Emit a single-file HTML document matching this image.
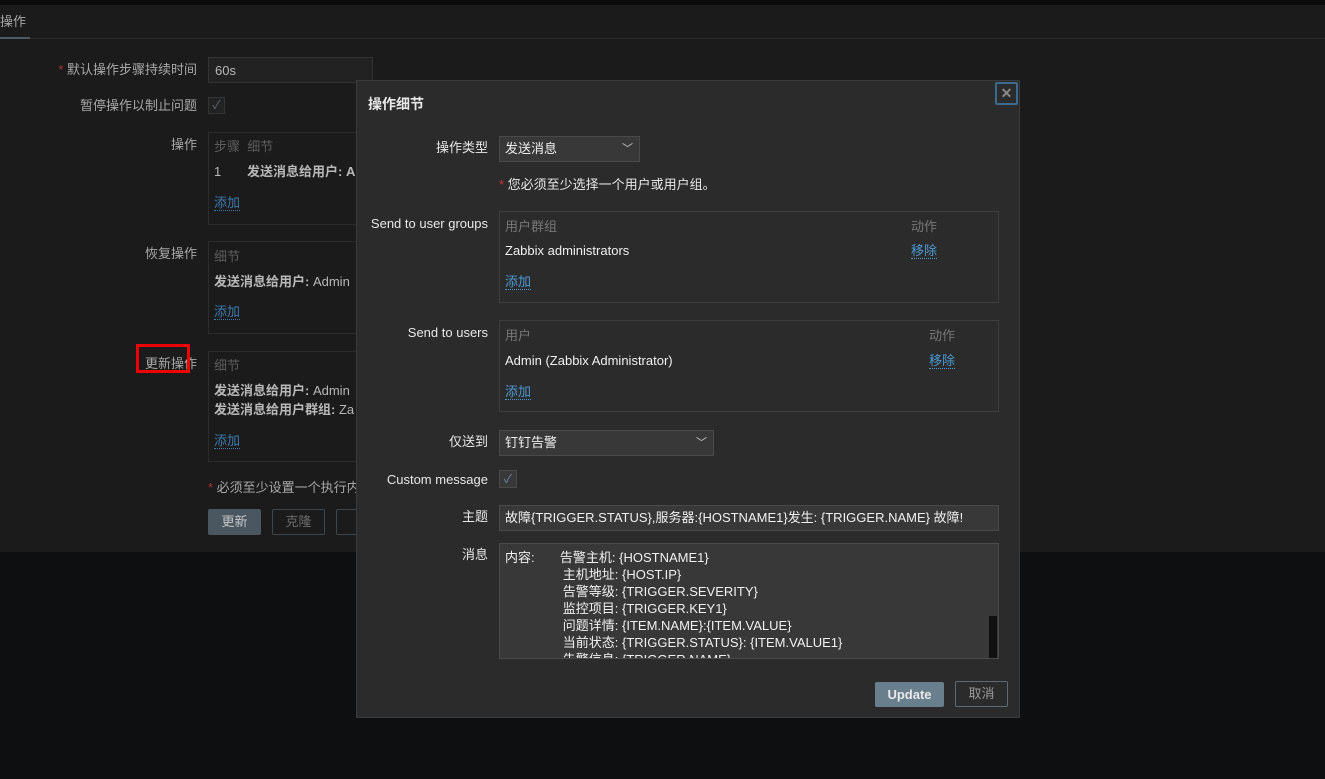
<!DOCTYPE html>
<html><head><meta charset="utf-8"><style>
*{box-sizing:border-box;margin:0;padding:0}
body{width:1325px;height:779px;background:#0e0f11;font-family:"Liberation Sans","Noto Sans CJK SC",sans-serif;font-size:13px;line-height:15px;color:#c8c8c8;position:relative;overflow:hidden}
.abs{position:absolute}
.page{left:0;top:5px;width:1325px;height:547px;background:#1b1b1b}
.lbl{text-align:right;color:#a8a8a8}
.box{border:1px solid #2c2c2c}
.link{color:#3c7ab0;border-bottom:1px dotted #3c7ab0}
.dlg{left:356px;top:80px;width:664px;height:638px;background:#2b2b2b;border:1px solid #3a3a3a}
.dl{color:#e8e8e8;text-align:right}
.in{background:#383838;border:1px solid #4a4a4a;color:#f0f0f0;padding-left:5px}
.dbox{border:1px solid #3e3e3e}
.dlink{color:#4a9ad4;border-bottom:1px dotted #4a9ad4}
</style></head><body>
<div class="abs" style="left:0;top:0;width:1325px;height:5px;background:#0b0b0b"></div>
<div class="abs page"></div>
<div class="abs" style="left:0;top:14px;color:#a8a8a8">操作</div>
<div class="abs" style="left:0;top:38px;width:1325px;height:1px;background:#2a2a2a"></div>
<div class="abs" style="left:0;top:37px;width:30px;height:2px;background:#4f5a63"></div>

<div class="abs lbl" style="left:40px;top:62px;width:157px"><span style="color:#a33">*</span> 默认操作步骤持续时间</div>
<div class="abs" style="left:208px;top:57px;width:165px;height:26px;background:#222;border:1px solid #333;padding:5px 6px;color:#b8b8b8">60s</div>
<div class="abs lbl" style="left:40px;top:98px;width:157px">暂停操作以制止问题</div>
<div class="abs" style="left:208px;top:97px;width:17px;height:17px;border:1px solid #333;background:#222;color:#5a6a76;font-size:12px;text-align:center;line-height:15px">✓</div>

<div class="abs lbl" style="left:100px;top:137px;width:97px">操作</div>
<div class="abs box" style="left:208px;top:132px;width:170px;height:93px"></div>
<div class="abs" style="left:214px;top:139px;color:#5c5c5c">步骤 &nbsp;细节</div>
<div class="abs" style="left:214px;top:164px;color:#b8b8b8">1</div>
<div class="abs" style="left:247px;top:164px;color:#b8b8b8;font-weight:bold">发送消息给用户: A</div>
<div class="abs link" style="left:214px;top:195px">添加</div>

<div class="abs lbl" style="left:100px;top:246px;width:97px">恢复操作</div>
<div class="abs box" style="left:208px;top:241px;width:170px;height:93px"></div>
<div class="abs" style="left:214px;top:249px;color:#5c5c5c">细节</div>
<div class="abs" style="left:214px;top:274px;color:#b8b8b8"><b>发送消息给用户:</b> Admin</div>
<div class="abs link" style="left:214px;top:304px">添加</div>

<div class="abs lbl" style="left:100px;top:356px;width:97px">更新操作</div>
<div class="abs" style="left:136px;top:344px;width:54px;height:29px;border:3px solid #e00"></div>
<div class="abs box" style="left:208px;top:351px;width:170px;height:111px"></div>
<div class="abs" style="left:214px;top:358px;color:#5c5c5c">细节</div>
<div class="abs" style="left:214px;top:383px;color:#b8b8b8"><b>发送消息给用户:</b> Admin</div>
<div class="abs" style="left:214px;top:402px;color:#b8b8b8"><b>发送消息给用户群组:</b> Za</div>
<div class="abs link" style="left:214px;top:433px">添加</div>
<div class="abs" style="left:208px;top:480px;color:#a8a8a8"><span style="color:#a33">*</span> 必须至少设置一个执行内</div>
<div class="abs" style="left:208px;top:509px;width:53px;height:26px;background:#4a5660;border-radius:2px;color:#c8c8c8;text-align:center;line-height:26px">更新</div>
<div class="abs" style="left:272px;top:509px;width:53px;height:26px;border:1px solid #3a4650;border-radius:2px;color:#6c6c6c;text-align:center;line-height:24px">克隆</div>
<div class="abs" style="left:336px;top:509px;width:30px;height:26px;border:1px solid #3a4650;border-radius:2px"></div>

<div class="abs dlg">
<div class="abs" style="left:11px;top:16px;font-size:14px;font-weight:bold;color:#e8e8e8">操作细节</div>
<div class="abs" style="left:638px;top:1px;width:23px;height:23px;border:2px solid #3b6a8f;border-radius:2px;color:#888;text-align:center;line-height:19px;font-weight:bold;font-size:14px">✕</div>
<div class="abs dl" style="left:0;top:59px;width:131px">操作类型</div>
<div class="abs in" style="left:142px;top:55px;width:141px;height:26px;line-height:24px">发送消息<span style="position:absolute;right:6px;top:0;color:#ccc;font-size:11px">﹀</span></div>
<div class="abs" style="left:142px;top:96px;color:#e8e8e8"><span style="color:#c33">*</span> 您必须至少选择一个用户或用户组。</div>
<div class="abs dl" style="left:0;top:135px;width:131px">Send to user groups</div>
<div class="abs dbox" style="left:142px;top:130px;width:500px;height:92px"></div>
<div class="abs" style="left:148px;top:138px;color:#777">用户群组</div>
<div class="abs" style="left:554px;top:138px;color:#777">动作</div>
<div class="abs" style="left:148px;top:162px;color:#f0f0f0">Zabbix administrators</div>
<div class="abs dlink" style="left:554px;top:162px">移除</div>
<div class="abs dlink" style="left:148px;top:193px">添加</div>
<div class="abs dl" style="left:0;top:244px;width:131px">Send to users</div>
<div class="abs dbox" style="left:142px;top:239px;width:500px;height:92px"></div>
<div class="abs" style="left:148px;top:247px;color:#777">用户</div>
<div class="abs" style="left:572px;top:247px;color:#777">动作</div>
<div class="abs" style="left:148px;top:272px;color:#f0f0f0">Admin (Zabbix Administrator)</div>
<div class="abs dlink" style="left:572px;top:272px">移除</div>
<div class="abs dlink" style="left:148px;top:303px">添加</div>
<div class="abs dl" style="left:0;top:353px;width:131px">仅送到</div>
<div class="abs in" style="left:142px;top:349px;width:215px;height:26px;line-height:24px">钉钉告警<span style="position:absolute;right:6px;top:0;color:#ccc;font-size:11px">﹀</span></div>
<div class="abs dl" style="left:0;top:391px;width:131px">Custom message</div>
<div class="abs" style="left:142px;top:389px;width:18px;height:18px;background:#383838;border:1px solid #4a4a4a;color:#6a8aa6;text-align:center;line-height:16px;font-size:12px">✓</div>
<div class="abs dl" style="left:0;top:428px;width:131px">主题</div>
<div class="abs in" style="left:142px;top:424px;width:500px;height:26px;line-height:24px;font-size:13px">故障{TRIGGER.STATUS},服务器:{HOSTNAME1}发生: {TRIGGER.NAME} 故障!</div>
<div class="abs dl" style="left:0;top:466px;width:131px">消息</div>
<div class="abs in" style="left:142px;top:462px;width:500px;height:116px;overflow:hidden;padding-top:5px;line-height:17px;white-space:pre">内容:       告警主机: {HOSTNAME1}
                主机地址: {HOST.IP}
                告警等级: {TRIGGER.SEVERITY}
                监控项目: {TRIGGER.KEY1}
                问题详情: {ITEM.NAME}:{ITEM.VALUE}
                当前状态: {TRIGGER.STATUS}: {ITEM.VALUE1}
                告警信息: {TRIGGER.NAME}</div>
<div class="abs" style="left:632px;top:535px;width:8px;height:42px;background:#111"></div>
<div class="abs" style="left:518px;top:601px;width:69px;height:25px;background:#6a7f8e;border-radius:2px;color:#e8e8e8;text-align:center;line-height:25px;font-weight:bold">Update</div>
<div class="abs" style="left:598px;top:600px;width:53px;height:26px;border:1px solid #5a6a76;border-radius:2px;color:#999;text-align:center;line-height:24px">取消</div>
</div>
</body></html>
